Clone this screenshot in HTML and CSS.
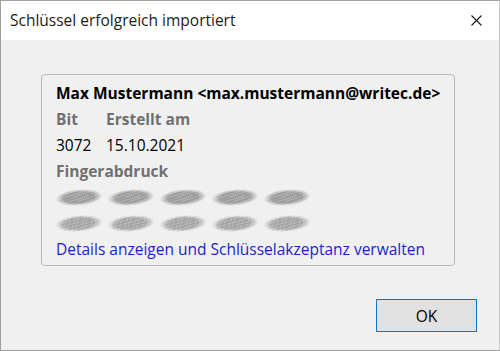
FILE: index.html
```html
<!DOCTYPE html>
<html lang="de">
<head>
<meta charset="utf-8">
<link rel="stylesheet" href="styles.css">
</head>
<body>
<div class="window">
  <div class="titlebar">
    <span class="title">Schlüssel erfolgreich importiert</span>
    <span class="close">
      <svg width="11" height="11" viewBox="0 0 11 11"><path d="M0.5 0.5 L10.5 10.5 M10.5 0.5 L0.5 10.5" stroke="#1a1a1a" stroke-width="1.1" fill="none"/></svg>
    </span>
  </div>
  <div class="content">
    <div class="group">
      <div class="row name">Max Mustermann &lt;max.mustermann@writec.de&gt;</div>
      <div class="row grid">
        <span class="label">Bit</span><span class="label">Erstellt am</span>
      </div>
      <div class="row grid">
        <span>3072</span><span>15.10.2021</span>
      </div>
      <div class="row label">Fingerabdruck</div>
      <div class="row blurs">
        <span class="blob"></span><span class="blob"></span><span class="blob"></span><span class="blob"></span><span class="blob"></span>
      </div>
      <div class="row blurs">
        <span class="blob b2"></span><span class="blob b2"></span><span class="blob b2"></span><span class="blob b2"></span><span class="blob b2"></span>
      </div>
      <div class="row link">Details anzeigen und Schlüsselakzeptanz verwalten</div>
    </div>
    <div class="footer">
      <button class="ok">OK</button>
    </div>
  </div>
</div>
</body>
</html>
```
FILE: styles.css
```css
html, body {
  margin: 0;
  padding: 0;
}
body {
  width: 500px;
  height: 351px;
  overflow: hidden;
  font-family: "Open Sans", "Noto Sans", sans-serif;
  font-size: 15.5px;
  color: #000;
}
.window {
  box-sizing: border-box;
  width: 500px;
  height: 351px;
  border: 1px solid #a0a0a0;
  border-right-color: #c8c8c8;
  display: flex;
  flex-direction: column;
  background: #f0f0f0;
}
.titlebar {
  height: 39px;
  background: #fff;
  display: flex;
  align-items: center;
  justify-content: space-between;
  padding: 0 17px 0 9px;
  flex-shrink: 0;
}
.title {
  font-size: 15.5px;
  color: #1b1b1b;
  margin-top: -2px;
}
.close {
  display: flex;
  width: 11px;
  height: 11px;
  margin-top: -1px;
}
.content {
  flex: 1;
  display: flex;
  flex-direction: column;
  padding: 34px 0 0 40px;
}
.group {
  box-sizing: border-box;
  width: 414px;
  height: 192px;
  border: 1px solid #b9b9b9;
  border-radius: 4px;
  padding: 5px 14px 0 14px;
}
.row {
  height: 26px;
  line-height: 26px;
  white-space: nowrap;
}
.name {
  font-weight: 700;
}
.grid {
  display: grid;
  grid-template-columns: 50px auto;
}
.label {
  font-weight: 700;
  color: #707070;
}
.blurs {
  display: flex;
  gap: 6px;
  align-items: center;
  padding-left: 0;
}
.blob {
  display: block;
  width: 46px;
  height: 17px;
  background: repeating-linear-gradient(-24deg, #6a6a6a 0 1.5px, #c4c4c4 1.5px 3.4px);
  filter: blur(0.7px);
  -webkit-mask-image: radial-gradient(ellipse 50% 50% at 50% 50%, #000 65%, transparent 100%);
  mask-image: radial-gradient(ellipse 50% 50% at 50% 50%, #000 65%, transparent 100%);
  transform: skewX(-30deg);
  opacity: 0.9;
}
.b2 {
  background: repeating-linear-gradient(-18deg, #727272 0 1.5px, #c8c8c8 1.5px 3.6px);
}
.link {
  color: #1e1ecc;
}
.footer {
  margin-top: auto;
  display: flex;
  justify-content: flex-end;
  padding: 0 22px 18px 0;
}
.ok {
  box-sizing: border-box;
  width: 101px;
  height: 33px;
  border: 1px solid #0078d7;
  background: #e1e1e1;
  font-family: "Open Sans", "Noto Sans", sans-serif;
  font-size: 15.5px;
  color: #000;
  padding: 0;
  margin: 0;
}
```
